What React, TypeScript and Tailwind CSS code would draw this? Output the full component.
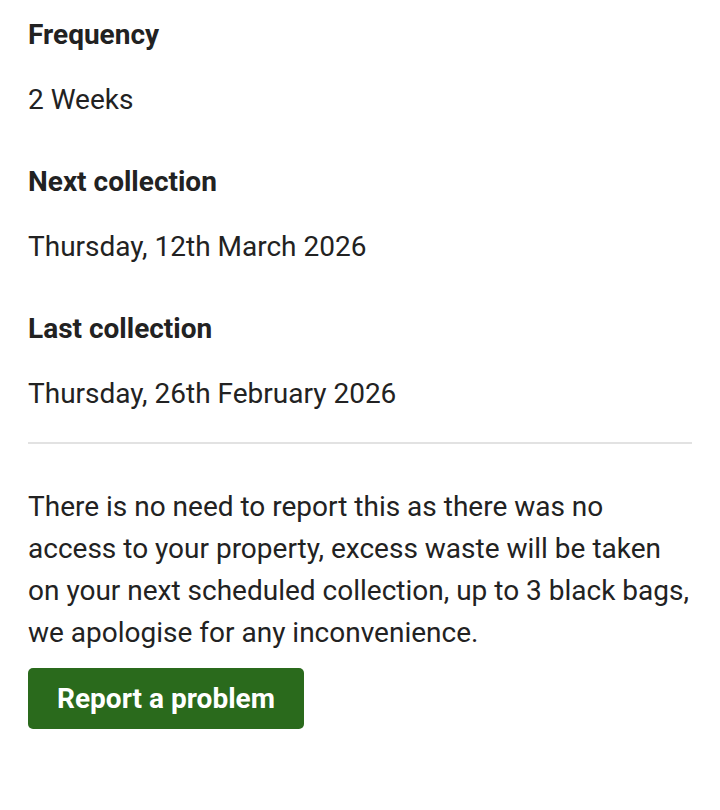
export default function App() {
  const rows = [
    { label: 'Frequency', value: '2 Weeks' },
    { label: 'Next collection', value: 'Thursday, 12th March 2026' },
    { label: 'Last collection', value: 'Thursday, 26th February 2026' },
  ];

  return (
    <div className="min-h-screen bg-white px-[28px] pt-[17px] text-[#222222] font-['Roboto',sans-serif]">
      {rows.map((row, i) => (
        <div key={row.label} className={i === 0 ? '' : 'mt-[46px]'}>
          <h3 className="text-[28px] leading-[36px] font-bold">{row.label}</h3>
          <p className="mt-[29px] text-[28px] leading-[36px]">{row.value}</p>
        </div>
      ))}

      <hr className="mt-[30px] w-[664px] border-0 border-t-2 border-[#e2e2e2]" />

      <p className="mt-[42px] w-[664px] text-[28px] leading-[42px]">
        There is no need to report this as there was no access to your property, excess waste will be
        taken on your next scheduled collection, up to 3 black bags, we apologise for any inconvenience.
      </p>

      <button
        type="button"
        className="mt-[14px] h-[61px] w-[276px] rounded-[5px] bg-[#2a6a1c] text-[28px] font-bold text-white"
      >
        Report a problem
      </button>
    </div>
  );
}
